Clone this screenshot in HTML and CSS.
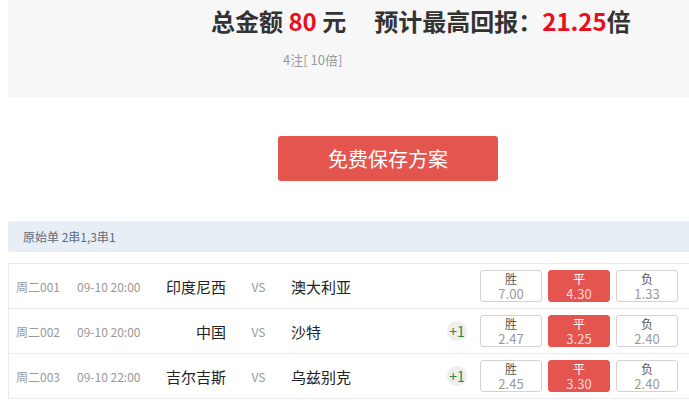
FILE: index.html
```html
<!DOCTYPE html>
<html lang="zh-CN">
<head>
  <meta charset="UTF-8">
  <title>方案确认</title>
  <link rel="stylesheet" href="styles.css">
</head>
<body>
  <div class="wrapper">
    <section class="summary">
      <h2 class="total">总金额 <em>80</em> 元<span class="gap"></span>预计最高回报：<em>21.25</em>倍</h2>
      <p class="detail">4注[ 10倍]</p>
    </section>

    <div class="save-row">
      <button class="save-btn">免费保存方案</button>
    </div>

    <div class="pass-bar">原始单 2串1,3串1</div>

    <div class="match-list">
      <div class="match">
        <span class="m-no">周二001</span>
        <span class="m-time">09-10 20:00</span>
        <span class="m-home">印度尼西</span>
        <span class="m-vs">VS</span>
        <span class="m-away">澳大利亚</span>
        <span class="m-extra"></span>
        <div class="odds">
          <div class="odd"><b>胜</b><i>7.00</i></div>
          <div class="odd on"><b>平</b><i>4.30</i></div>
          <div class="odd"><b>负</b><i>1.33</i></div>
        </div>
      </div>
      <div class="match">
        <span class="m-no">周二002</span>
        <span class="m-time">09-10 20:00</span>
        <span class="m-home">中国</span>
        <span class="m-vs">VS</span>
        <span class="m-away">沙特</span>
        <span class="m-extra"><span class="plus">+1</span></span>
        <div class="odds">
          <div class="odd"><b>胜</b><i>2.47</i></div>
          <div class="odd on"><b>平</b><i>3.25</i></div>
          <div class="odd"><b>负</b><i>2.40</i></div>
        </div>
      </div>
      <div class="match">
        <span class="m-no">周二003</span>
        <span class="m-time">09-10 22:00</span>
        <span class="m-home">吉尔吉斯</span>
        <span class="m-vs">VS</span>
        <span class="m-away">乌兹别克</span>
        <span class="m-extra"><span class="plus">+1</span></span>
        <div class="odds">
          <div class="odd"><b>胜</b><i>2.45</i></div>
          <div class="odd on"><b>平</b><i>3.30</i></div>
          <div class="odd"><b>负</b><i>2.40</i></div>
        </div>
      </div>
    </div>
  </div>
</body>
</html>
```

FILE: styles.css
```css
html,
body {
  margin: 0;
  overflow: hidden;
  background: #fff;
}

body {
  font-family: "Noto Sans CJK SC", "Noto Sans", sans-serif;
  color: #333;
  padding-left: 8px;
}

.wrapper {
  width: 760px;
}

/* 金额汇总 */
.summary {
  background: #f7f7f7;
  height: 97px;
  padding-left: 203px;
  box-sizing: border-box;
}

.total {
  margin: 0;
  font-size: 24px;
  line-height: 42px;
  height: 42px;
  font-weight: 700;
  color: #333;
  white-space: nowrap;
}

.total em {
  font-style: normal;
  color: #e8101c;
}

.total .gap {
  display: inline-block;
  width: 28px;
}

.detail {
  margin: 0;
  padding-left: 72px;
  font-size: 13px;
  line-height: 36px;
  color: #999;
}

/* 保存按钮 */
.save-row {
  padding: 39px 0 40px 270px;
}

.save-btn {
  display: block;
  width: 220px;
  height: 45px;
  border: none;
  border-radius: 3px;
  background: #e5554f;
  color: #fff;
  font-family: inherit;
  font-size: 20px;
  cursor: pointer;
}

/* 过关方式 */
.pass-bar {
  background: #e8eef6;
  border-radius: 3px 0 0 3px;
  height: 31px;
  line-height: 31px;
  padding-left: 15px;
  font-size: 12px;
  color: #5c6a7e;
}

/* 赛事列表 */
.match-list {
  margin-top: 11px;
  border-top: 1px solid #eaeaea;
  border-left: 1px solid #eaeaea;
  border-bottom: 1px solid #eaeaea;
}

.match {
  display: flex;
  align-items: center;
  height: 44px;
  border-bottom: 1px solid #eaeaea;
}

.match:last-child {
  border-bottom: none;
}

.m-no {
  width: 61px;
  padding-left: 7px;
  font-size: 12px;
  color: #999;
}

.m-time {
  width: 73px;
  font-size: 12px;
  color: #999;
}

.m-home {
  width: 76px;
  text-align: right;
  font-size: 15px;
  color: #222;
}

.m-vs {
  width: 65px;
  text-align: center;
  font-size: 12px;
  color: #999;
}

.m-away {
  width: 149px;
  font-size: 15px;
  color: #222;
}

.m-extra {
  width: 34px;
  margin-right: 6px;
  display: flex;
  justify-content: center;
}

.plus {
  width: 20px;
  height: 20px;
  border-radius: 50%;
  background: #eee;
  color: #2a8a3a;
  font-size: 14px;
  line-height: 20px;
  text-align: center;
}

.odds {
  display: flex;
  gap: 6px;
}

.odd {
  width: 62px;
  height: 32px;
  box-sizing: border-box;
  border: 1px solid #d2d2d2;
  border-radius: 3px;
  text-align: center;
  background: #fff;
}

.odd b,
.odd i {
  display: block;
  font-style: normal;
  font-weight: 400;
  line-height: 15px;
}

.odd b {
  font-size: 12px;
  color: #555;
}

.odd i {
  font-size: 13px;
  color: #999;
}

.odd.on {
  background: #e5554f;
  border-color: #e5554f;
}

.odd.on b {
  color: #fff;
}

.odd.on i {
  color: #fcd6d4;
}
```
